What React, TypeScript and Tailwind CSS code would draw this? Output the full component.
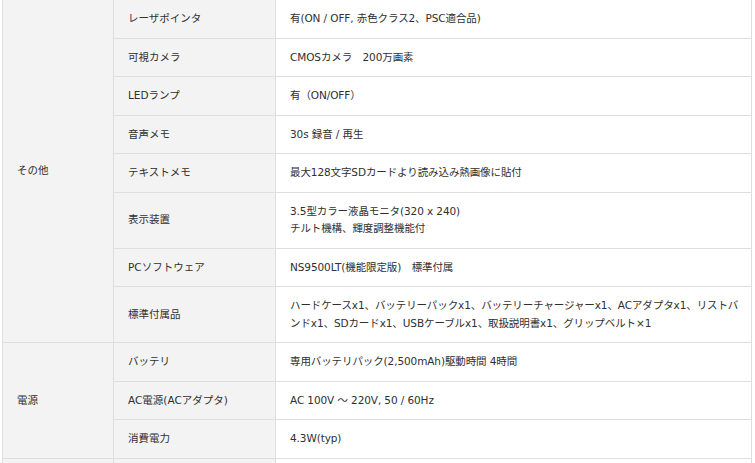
import React from 'react'

interface SpecRow {
  label: string
  value: React.ReactNode
}

interface SpecGroup {
  group: string
  rows: SpecRow[]
}

const groups: SpecGroup[] = [
  {
    group: 'その他',
    rows: [
      { label: 'レーザポインタ', value: '有(ON / OFF, 赤色クラス2、PSC適合品)' },
      { label: '可視カメラ', value: 'CMOSカメラ　200万画素' },
      { label: 'LEDランプ', value: '有（ON/OFF）' },
      { label: '音声メモ', value: '30s 録音 / 再生' },
      { label: 'テキストメモ', value: '最大128文字SDカードより読み込み熱画像に貼付' },
      {
        label: '表示装置',
        value: (
          <>
            3.5型カラー液晶モニタ(320 x 240)
            <br />
            チルト機構、輝度調整機能付
          </>
        ),
      },
      { label: 'PCソフトウェア', value: 'NS9500LT(機能限定版)　標準付属' },
      {
        label: '標準付属品',
        value: (
          <>
            ハードケースx1、バッテリーパックx1、バッテリーチャージャーx1、ACアダプタx1、リストバ
            <br />
            ンドx1、SDカードx1、USBケーブルx1、取扱説明書x1、グリップベルト×1
          </>
        ),
      },
    ],
  },
  {
    group: '電源',
    rows: [
      { label: 'バッテリ', value: '専用バッテリパック(2,500mAh)駆動時間 4時間' },
      { label: 'AC電源(ACアダプタ)', value: 'AC 100V ～ 220V, 50 / 60Hz' },
      { label: '消費電力', value: '4.3W(typ)' },
    ],
  },
  {
    group: '',
    rows: [{ label: '', value: '' }],
  },
]

const cell = 'border border-[#dedede] px-[14px] py-[10px] align-middle text-left font-normal'

export default function App() {
  return (
    <div className="w-[755px] h-[463px] overflow-hidden bg-white">
      <table className="mt-[-1px] ml-[2px] w-[750px] table-fixed border-collapse text-[10.5px] leading-[17.5px] text-[#2f2f2f] font-['DejaVu_Sans','Noto_Sans_CJK_JP',sans-serif]">
        <colgroup>
          <col className="w-[111px]" />
          <col className="w-[162px]" />
          <col />
        </colgroup>
        <tbody>
          {groups.map((g, gi) =>
            g.rows.map((r, ri) => (
              <tr key={`${gi}-${ri}`}>
                {ri === 0 && (
                  <th rowSpan={g.rows.length} className={`${cell} bg-[#f3f3f3]`}>
                    {g.group}
                  </th>
                )}
                <th className={`${cell} bg-[#f3f3f3]`}>{r.label || '\u00a0'}</th>
                <td className={`${cell} bg-white whitespace-nowrap tracking-[-0.1px]`}>{r.value || '\u00a0'}</td>
              </tr>
            ))
          )}
        </tbody>
      </table>
    </div>
  )
}
